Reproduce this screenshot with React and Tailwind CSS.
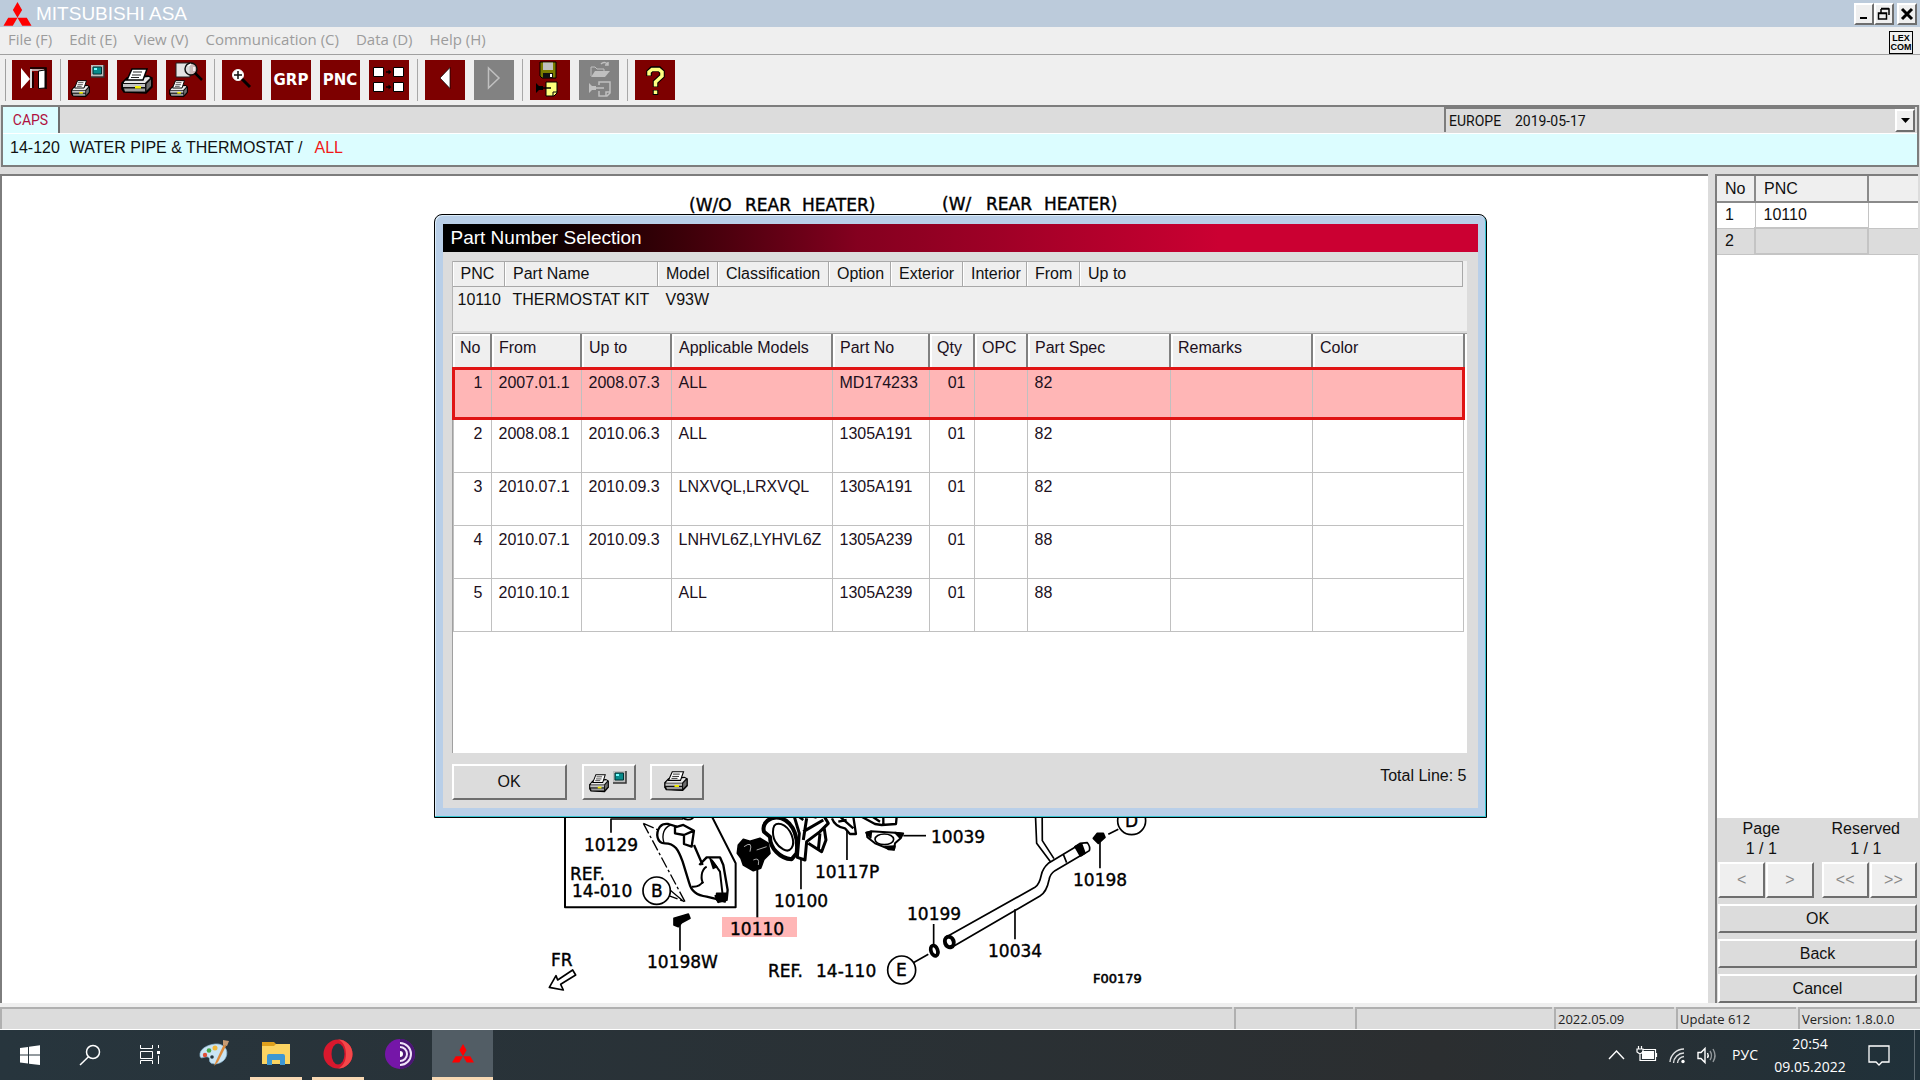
import React, { useState } from 'react';

const menus = ['File (F)', 'Edit (E)', 'View (V)', 'Communication (C)', 'Data (D)', 'Help (H)'];

const parts = [
  { no: 1, from: '2007.01.1', upTo: '2008.07.3', models: 'ALL', partNo: 'MD174233', qty: '01', spec: '82' },
  { no: 2, from: '2008.08.1', upTo: '2010.06.3', models: 'ALL', partNo: '1305A191', qty: '01', spec: '82' },
  { no: 3, from: '2010.07.1', upTo: '2010.09.3', models: 'LNXVQL,LRXVQL', partNo: '1305A191', qty: '01', spec: '82' },
  { no: 4, from: '2010.07.1', upTo: '2010.09.3', models: 'LNHVL6Z,LYHVL6Z', partNo: '1305A239', qty: '01', spec: '88' },
  { no: 5, from: '2010.10.1', upTo: '', models: 'ALL', partNo: '1305A239', qty: '01', spec: '88' },
];

const raised = 'border-2 border-t-white border-l-white border-r-[#6e6e6e] border-b-[#6e6e6e]';

function Logo({ className }) {
  return (
    <svg viewBox="0 0 28 24" className={className} fill="#fe0000">
      <path d="M14 0 18.6 8 14 15.7 9.4 8zM14 15.7H4.7L0 23.7h9.3zM14 15.7h9.3l4.7 8h-9.3z" />
    </svg>
  );
}

function Printer({ x = 0, y = 0, width = 32, height = 27 }) {
  return (
    <svg x={x} y={y} width={width} height={height} viewBox="0 0 32 27" preserveAspectRatio="none">
      <path d="M1 15 6 10 27 8 31 10V19L25 25 3 24 1 21z" fill="#111" stroke="#000" strokeWidth="1.5" />
      <path d="M3 14 7 11 28 9 29 10 24 15H3z" fill="#e8e8e8" />
      <path d="M2 16H24V19H2z" fill="#c4c4c4" />
      <path d="M3 20.500H24V23.500H4z" fill="#9b9b9b" />
      <path d="M25.500 16 30 11.500V18L25.500 22.500z" fill="#6e6e6e" />
      <path d="M11 1H26L22 12H6z" fill="#fff" stroke="#000" strokeWidth="1.5" />
      <path d="M12 4H21M11 7H20M10 9.500H18" stroke="#222" strokeWidth="1.200" />
      <path d="M14 18H20V20.500H14z" fill="#f4f000" />
    </svg>
  );
}

function Monitor({ x, y }) {
  return (
    <g transform={`translate(${x} ${y})`}>
      <path d="M0 0H13V12H0z" fill="#bdbdbd" />
      <path d="M13 0V12H0" fill="none" stroke="#333" strokeWidth="1.500" />
      <path d="M2 2H10.500V9H2z" fill="#078a8a" stroke="#033" />
      <path d="M3 3H6V5H3z" fill="#7ff" />
    </g>
  );
}

function Palm({ children }) {
  return <svg viewBox="0 0 40 40" className="block size-10">{children}</svg>;
}

// null is a separator
const tools = [
  {
    label: 'Exit',
    icon: (
      <Palm>
        <path d="M9 8V29L18 19z" fill="#fff" />
        <path d="M19 9V28" stroke="#d8d8d8" strokeWidth="2" />
        <path d="M18 8H34V29M21 12V28" fill="none" stroke="#000" strokeWidth="1.500" />
        <path d="M20 10H32" stroke="#ddd" strokeWidth="1.500" />
        <path d="M26.500 11 33 10V28L26.500 28.500z" fill="#fff" stroke="#000" />
      </Palm>
    ),
  },
  null,
  { label: 'Print screen', icon: <Palm><Printer x={3} y={20} width={19} height={18} /><Monitor x={23} y={5} /></Palm> },
  { label: 'Print', icon: <Palm><Printer x={4} y={8} width={32} height={27} /></Palm> },
  {
    label: 'Print preview',
    icon: (
      <Palm>
        <Printer x={3} y={20} width={19} height={18} />
        <path d="M10 3H24V17H10z" fill="#e4e4e4" stroke="#222" />
        <circle cx="25" cy="9" r="6" fill="#d9d9d9" fillOpacity=".85" stroke="#111" strokeWidth="1.500" />
        <path d="M22 6 25 4M28 7V11" stroke="#fff" strokeWidth="1.500" />
        <path d="M29 13 36 20" stroke="#000" strokeWidth="2.500" />
      </Palm>
    ),
  },
  null,
  {
    label: 'Zoom in',
    icon: (
      <Palm>
        <circle cx="16" cy="15" r="5.500" fill="#fff" stroke="#f4f4f4" strokeWidth="1" />
        <path d="M16 11V19M12 15H20" stroke="#111" strokeWidth="1.500" />
        <path d="M20 19 28 27" stroke="#000" strokeWidth="3" />
      </Palm>
    ),
  },
  { label: 'Group', text: 'GRP' },
  { label: 'Part name code', text: 'PNC' },
  {
    label: 'Compare',
    icon: (
      <Palm>
        <path d="M4.500 7.500H14.500V16.500H4.500zM24.500 7.500H34.500V16.500H24.500zM4.500 22.500H14.500V31.500H4.500zM24.500 22.500H34.500V31.500H24.500z" fill="#fff" stroke="#000" />
        <path d="M17 12H20M17 27H20" stroke="#000" strokeWidth="1.500" />
        <path d="M19.500 9.500 22.500 12 19.500 14.500zM19.500 24.500 22.500 27 19.500 29.500z" />
      </Palm>
    ),
  },
  null,
  { label: 'Previous', icon: <Palm><path d="M25 7.500V28.500L15 18z" fill="#fff" stroke="#000" strokeWidth=".7" /></Palm> },
  {
    label: 'Next',
    disabled: true,
    icon: <Palm><path d="M14.500 8V28L25 18z" fill="none" stroke="#c0c0c0" strokeWidth="1.500" /></Palm>,
  },
  null,
  {
    label: 'Save memo',
    icon: (
      <Palm>
        <path d="M10 2H26V18H12L10 16z" fill="#7c7c00" stroke="#000" />
        <path d="M13 2.500H23V10H13z" fill="#c0c0c0" />
        <path d="M13 13H23V18H13z" fill="#111" />
        <path d="M20 14H22V17H20z" fill="#fff" />
        <path d="M16 22H27V33L24 36H16z" fill="#ffff7c" stroke="#000" />
        <path d="M27 32H23V36" fill="none" stroke="#000" />
        <path d="M6 23 9 26H13V30H9L6 33z" fill="#000" />
        <path d="M13 28H21" stroke="#000" strokeWidth="1.500" />
      </Palm>
    ),
  },
  {
    label: 'Open memo',
    disabled: true,
    icon: (
      <Palm>
        <path d="M12 16V7H16L18 9H25V11" fill="none" stroke="#c0c0c0" />
        <path d="M12 17 16 11H31L26 17z" fill="#c0c0c0" />
        <path d="M22 4C25 1 28 3 29 5M26 5H29V2" fill="none" stroke="#c0c0c0" strokeWidth="1.500" />
        <path d="M20 25V22H31V33L28 36H20V31M31 32H27V36" fill="none" stroke="#c0c0c0" strokeWidth="1.500" />
        <path d="M10 23 13 26H17V30H13L10 33z" fill="#c0c0c0" />
        <path d="M17 28H25" stroke="#c0c0c0" strokeWidth="1.500" />
      </Palm>
    ),
  },
  null,
  {
    label: 'Help',
    icon: (
      <Palm>
        <g fill="none" strokeLinejoin="miter">
          <path d="M14 16V12L17 9H24L27 12V16L20.500 22V27M20.500 30V35" stroke="#000" strokeWidth="5.500" />
          <path d="M14 15.500V12L17 9.500H24L27 12V16L20.500 22V26.500M20.500 30.500V34" stroke="#ffff80" strokeWidth="3.500" />
        </g>
      </Palm>
    ),
  },
];

function Toolbar() {
  return (
    <div className="flex items-center gap-2 border-t border-[#a0a0a0] pl-[5px] py-1 h-[51px] bg-[#efefef]">
      <div className="self-stretch w-px bg-[#a0a0a0] -mr-0.5" />
      {tools.map((tool, i) =>
        tool === null ? (
          <div key={i} className="self-stretch w-px -mr-px bg-[#a8a8a8]" />
        ) : (
          <button
            key={i}
            aria-label={tool.label}
            disabled={tool.disabled}
            className={`size-10 shrink-0 overflow-hidden font-['DejaVu_Sans'] font-bold text-[15px] text-white ${tools[i - 1] ? 'ml-px' : ''} ${tool.disabled ? 'bg-[#828282]' : 'bg-[#7d0000]'}`}
          >
            {tool.icon || tool.text}
          </button>
        )
      )}
    </div>
  );
}

function WindowButton({ label, children }) {
  return (
    <button aria-label={label} className={`w-5 h-[22px] bg-[#efefef] ${raised}`}>
      <svg viewBox="0 0 16 18" className="block size-full" fill="none" stroke="#000">{children}</svg>
    </button>
  );
}

// labels of the exploded view: [text, x, baseline]
const labels = [
  ['(W/O', 689, 211], ['REAR', 745, 211], ['HEATER)', 802, 211],
  ['(W/', 942, 210], ['REAR', 986, 210], ['HEATER)', 1044, 210],
  ['10129', 584, 851], ['REF.', 570, 880], ['14-010', 572, 897], ['B', 651, 897],
  ['10100', 774, 907], ['10117P', 815, 878], ['10110', 730, 935], ['10198W', 647, 968],
  ['FR', 551, 966], ['REF.', 768, 977], ['14-110', 816, 977], ['E', 896, 976],
  ['10039', 931, 843], ['10199', 907, 920], ['10034', 988, 957], ['10198', 1073, 886], ['D', 1125, 827],
];

function Diagram() {
  return (
    <svg viewBox="2 176 1706 826" className="block w-full" role="img" aria-label="Water pipe and thermostat">
      <rect x="722" y="917" width="75" height="20" fill="#ffb6b6" />
      <g transform="translate(540 800) scale(.3333)" fill="none" stroke="#000" strokeWidth="5" strokeLinejoin="round">
        <path d="M75 -60V322H587V190L460 -60" strokeWidth="6" />
        <path d="M213 98V57H430M425 50Q440 66 460 54" />
        <path d="M310 70 435 305 388 288M310 70 355 90" strokeWidth="4" strokeDasharray="34 8 8 8" />
        <path d="M375 130C350 130 346 100 360 80Q368 70 385 72L410 80M375 130C405 130 415 150 428 185L448 250Q456 285 500 290L540 300" strokeWidth="7" />
        <path d="M392 75C372 82 364 105 372 128" strokeWidth="4" />
        <path d="M405 82 430 75 462 92 455 140 432 132V105L405 100zM432 105 462 92" strokeWidth="7" />
        <path d="M462 135 488 195M478 195 500 172H540L550 195 563 270 560 300 535 306 526 285" strokeWidth="7" />
        <path d="M515 180 540 215 548 285M500 200C482 210 482 240 490 250M455 260Q480 262 488 245" strokeWidth="6" />
        <path d="M510 175 530 200 520 205zM530 280 560 280 555 306 530 300z" fill="#000" />
        <path d="M390 270 432 305" strokeWidth="4" />
        <circle cx="350" cy="272" r="41" />
        <path d="M595 135 610 118 630 124 660 115 685 130 690 160 672 178 662 205 640 212 610 195 603 175 592 160z" fill="#000" />
        <path d="M612 140Q640 120 630 155M650 150 680 140M640 180Q660 170 655 195" stroke="#fff" strokeWidth="2" />
        <path d="M652 205V352" strokeWidth="6" />
        <path d="M672 95C665 70 690 45 725 55C765 70 775 120 770 160L755 178C720 175 690 145 690 110z" strokeWidth="12" />
        <path d="M700 85C705 60 740 70 755 105C768 140 750 160 730 148C710 138 695 115 700 85z" strokeWidth="6" />
        <path d="M760 40 778 100 772 172 795 180 800 125 840 95 865 70 850 45M800 55 790 120M805 130 845 155 858 120 852 80M840 100 835 150M790 95 850 60" strokeWidth="9" />
        <path d="M780 40 830 52M750 30 790 60" strokeWidth="8" />
        <path d="M783 175V268M921 90V180" />
        <path d="M876 55Q885 80 915 85L930 102 948 102 940 50M900 50 940 85M895 65 920 60" strokeWidth="7" />
        <path d="M402 355 425 348 445 342 450 355 425 368 415 380 402 375z" fill="#000" />
        <path d="M420 375V452M28 562 48 527 53 540 98 510 107 525 62 553 70 570z" />
      </g>
      <g transform="translate(850 800) scale(.3333)" fill="none" stroke="#000" strokeWidth="5" strokeLinejoin="round">
        <path d="M35 50 75 72 95 75 138 72 140 50M100 50V76M60 45 90 65" strokeWidth="7" />
        <path d="M50 98 62 94 135 98 158 102 152 115 135 130 132 148 112 145 75 130 52 112z" strokeWidth="6" />
        <ellipse cx="103" cy="118" rx="28" ry="16" />
        <path d="M105 140 135 138 132 150 115 148zM135 98 160 100 150 114zM48 98 64 95 62 114z" fill="#000" />
        <path d="M160 107H228" />
        <path d="M552 -60 560 130 602 186M576 -60 577 122 612 176" />
        <path d="M290 410 555 262Q568 254 574 225Q578 205 595 190L685 136" />
        <path d="M312 438 570 288Q590 276 597 240Q600 222 615 212L700 162" />
        <path d="M640 163 650 188M675 140Q690 150 692 168L718 152Q722 140 712 128L690 130z" />
        <path d="M675 140 695 132 705 160 690 166z" fill="#000" />
        <ellipse cx="298" cy="426" rx="13" ry="16" strokeWidth="12" transform="rotate(-20 298 426)" />
        <ellipse cx="253" cy="452" rx="10" ry="16" strokeWidth="11" transform="rotate(-20 253 452)" />
        <path d="M730 115 742 100 760 100 765 112 745 130z" fill="#000" />
        <path d="M750 125V205M775 103 805 88M495 328V418M251 372V435M190 488 235 463" />
        <circle cx="845" cy="62" r="42" />
        <circle cx="155" cy="510" r="42" />
      </g>
      <g className="font-['DejaVu_Sans'] text-[17px]" stroke="#000" strokeWidth=".4">
        {labels.map(([text, x, y]) => (
          <text key={`${x}-${y}`} x={x} y={y}>{text}</text>
        ))}
      </g>
      <text x="1093" y="983" className="font-['DejaVu_Sans'] text-[13px]" stroke="#000" strokeWidth=".6">F00179</text>
    </svg>
  );
}

function SidePanel() {
  const nav = 'h-9 bg-[#efefef] text-[#8a8a8a] ' + raised;
  const action = 'h-[29px] leading-5 bg-[#dcdcdc] ' + raised;
  return (
    <aside className="w-[203px] shrink-0 flex flex-col border-l-2 border-t-2 border-[#7d7d7d] bg-[#dcdcdc] text-base">
      <div className="flex-1 bg-white">
        <table className="w-full table-fixed border-collapse text-left leading-5">
          <colgroup><col className="w-[38px]" /><col className="w-[113px]" /><col /></colgroup>
          <thead>
            <tr className="h-[26px] bg-[#efefef]">
              <th className="font-normal pl-2 border-r-2 border-b-2 border-[#8a8a8a]">No</th>
              <th className="font-normal pl-2 border-r-2 border-b-2 border-[#8a8a8a]">PNC</th>
              <th className="border-b-2 border-[#8a8a8a]" aria-label="Name" />
            </tr>
          </thead>
          <tbody>
            <tr className="h-[26px]">
              <td className="pl-2 border border-l-0 border-[#c4c4c4]">1</td>
              <td className="pl-2 border border-[#c4c4c4]">10110</td>
              <td className="border-b border-[#c4c4c4]" />
            </tr>
            <tr className="h-[26px] bg-[#dcdcdc]">
              <td className="pl-2 border border-l-0 border-[#c4c4c4]">2</td>
              <td className="border-2 border-[#c4c4c4]" />
              <td className="border-b border-[#c4c4c4]" />
            </tr>
          </tbody>
        </table>
      </div>
      <div className="grid grid-cols-2 gap-x-4 text-center leading-5 pt-px pb-[3px]">
        <p className="pr-1">Page<br />1 / 1</p>
        <p className="pr-3">Reserved<br />1 / 1</p>
      </div>
      <div className="flex gap-2 px-px mb-1.5">
        <div className="flex flex-1 gap-px">
          <button aria-label="Previous page" className={`flex-1 ${nav}`}>&lt;</button>
          <button aria-label="Next page" className={`flex-1 ${nav}`}>&gt;</button>
        </div>
        <div className="flex flex-1 gap-px">
          <button aria-label="Previous reserved" className={`flex-1 ${nav}`}>&lt;&lt;</button>
          <button aria-label="Next reserved" className={`flex-1 ${nav}`}>&gt;&gt;</button>
        </div>
      </div>
      <div className="flex flex-col gap-1.5 px-px">
        <button className={action}>OK</button>
        <button className={action}>Back</button>
        <button className={action}>Cancel</button>
      </div>
    </aside>
  );
}

function PartDialog() {
  const [selected, setSelected] = useState(1);
  const info = 'font-normal pl-2 h-[25px] border border-l-0 border-[#a8a8a8] shadow-[inset_1px_0_0_#fff]';
  const head = 'font-normal pl-[7px] pb-1.5 border-r-2 border-b-2 border-[#808080] shadow-[inset_2px_2px_0_#fff]';
  const cell = 'align-top pl-[7px] pt-1 border border-[#c0c0c0]';

  return (
    <section
      role="dialog"
      aria-label="Part Number Selection"
      className="w-[1053px] max-w-full rounded-t-lg border border-black bg-[#b9cfe8] px-2 py-[9px] shadow-[inset_-1px_-1px_0_#35c3d0,inset_1px_1px_0_#dcecf8]"
    >
      <div className="bg-[#dcdcdc]">
        <h2 className="h-7 pl-2 bg-linear-to-r from-black via-[#84001f] via-40% to-[#cb0032] to-75% text-white text-[19px] leading-7">
          Part Number Selection
        </h2>
        <div className="pt-[9px] pl-[9px] pr-[11px] pb-2">
          <div className="h-[70px] bg-[#efefef] border-l border-[#b4b4b4] pr-1">
            <table className="w-full table-fixed border-collapse text-left whitespace-nowrap leading-5">
              <colgroup>
                <col className="w-[52px]" /><col className="w-[153px]" /><col className="w-[60px]" />
                <col className="w-[111px]" /><col className="w-[62px]" /><col className="w-[72px]" />
                <col className="w-[64px]" /><col className="w-[53px]" /><col />
              </colgroup>
              <thead>
                <tr>
                  {['PNC', 'Part Name', 'Model', 'Classification', 'Option', 'Exterior', 'Interior', 'From', 'Up to'].map(h => (
                    <th key={h} className={info}>{h}</th>
                  ))}
                </tr>
              </thead>
              <tbody>
                <tr>
                  <td className="pl-[5px] pt-[3px]">10110</td>
                  <td className="pl-2 pt-[3px]">THERMOSTAT KIT</td>
                  <td className="pl-2 pt-[3px]">V93W</td>
                  <td colSpan={6} />
                </tr>
              </tbody>
            </table>
          </div>

          <div className="mt-0.5 min-h-[420px] bg-white border-l border-t border-[#a0a0a0] pr-0.5">
            <table className="w-full table-fixed border-collapse text-left leading-5 text-[#20101c]">
              <colgroup>
                <col className="w-[38px]" /><col className="w-[90px]" /><col className="w-[90px]" />
                <col className="w-[161px]" /><col className="w-[97px]" /><col className="w-[45px]" />
                <col className="w-[53px]" /><col className="w-[143px]" /><col className="w-[142px]" /><col />
              </colgroup>
              <thead>
                <tr className="h-[34px] bg-[#efefef]">
                  {['No', 'From', 'Up to', 'Applicable Models', 'Part No', 'Qty', 'OPC', 'Part Spec', 'Remarks', 'Color'].map(h => (
                    <th key={h} className={head}>{h}</th>
                  ))}
                </tr>
              </thead>
              <tbody>
                {parts.map(p => (
                  <tr
                    key={p.no}
                    onClick={() => setSelected(p.no)}
                    className={p.no === selected ? 'h-[51px] bg-[#ffb6b6] outline-3 -outline-offset-2 outline-[#e01414]' : 'h-[53px]'}
                  >
                    <td className={`${cell} text-right pr-2`}>{p.no}</td>
                    <td className={cell}>{p.from}</td>
                    <td className={cell}>{p.upTo}</td>
                    <td className={cell}>{p.models}</td>
                    <td className={cell}>{p.partNo}</td>
                    <td className={`${cell} text-right pr-2`}>{p.qty}</td>
                    <td className={cell} />
                    <td className={cell}>{p.spec}</td>
                    <td className={cell} />
                    <td className={cell} />
                  </tr>
                ))}
              </tbody>
            </table>
          </div>

          <div className="flex items-start mt-[11px]">
            <button className={`w-[115px] h-9 ${raised}`}>OK</button>
            <button aria-label="Print screen" className={`ml-[15px] w-[54px] h-9 ${raised}`}>
              <svg viewBox="0 0 50 32" className="block size-full">
                <Printer x={5} y={8} width={20} height={19} />
                <Monitor x={29} y={5} />
              </svg>
            </button>
            <button aria-label="Print" className={`ml-3.5 w-[54px] h-9 ${raised}`}>
              <svg viewBox="0 0 50 32" className="block size-full"><Printer x={12} y={5} width={24} height={21} /></svg>
            </button>
            <p className="ml-auto leading-6">Total Line: 5</p>
          </div>
        </div>
      </div>
    </section>
  );
}

function StatusBar() {
  const cell = 'border-l-2 border-t-2 border-[#b0b0b0] pl-0.5';
  return (
    <footer className="flex gap-0.5 h-[23px] bg-[#dcdcdc] border-b border-white font-['Open_Sans'] text-[13px] leading-5 text-[#222]">
      <div className={`flex-1 ${cell}`} />
      <div className={`w-[119px] ${cell}`} />
      <div className={`w-[197px] ${cell}`} />
      <div className={`w-[120px] ${cell}`}>2022.05.09</div>
      <div className={`w-[120px] ${cell}`}>Update 612</div>
      <div className={`w-[122px] ${cell}`}>Version: 1.8.0.0</div>
    </footer>
  );
}

const systemButtons = [
  {
    name: 'Start',
    icon: <path d="M5 8 13 7V14.500H5zM14 6.800 25 5.300V14.500H14zM5 15.500H13V23.500L5 22.500zM14 15.500H25V25L14 23.700z" fill="#fff" />,
  },
  {
    name: 'Search',
    icon: <g fill="none" stroke="#fff" strokeWidth="1.500"><circle cx="18" cy="12" r="6.500" /><path d="M13.500 16.800 5 25" /></g>,
  },
  {
    name: 'Task view',
    icon: (
      <g fill="none" stroke="#fff">
        <path d="M5.500 5V8.500H17.500V5M5.500 24V20.500H17.500V24M5.500 11.500H17.500V18.500H5.500zM23.500 5V8M23.500 15.500V24" />
        <path d="M22 11H25V14H22z" fill="#fff" stroke="none" />
      </g>
    ),
  },
];

const apps = [
  {
    name: 'Paint',
    icon: (
      <>
        <path d="M16 5C25 4 30 11 27 18C24 25 15 26 12 24C9 22 12 19 9 18C5 17 2 21 1 17C0 10 8 6 16 5z" fill="#c9e4f4" stroke="#8db9d4" strokeWidth=".7" />
        <circle cx="6" cy="16" r="2.200" fill="#e04f38" /><circle cx="10" cy="11.500" r="2.300" fill="#48a547" /><circle cx="16" cy="9" r="2.500" fill="#f1b83b" />
        <circle cx="13" cy="18" r="1.800" fill="#26353e" />
        <path d="M25 5 17 22 15 27 19 23 27 7z" fill="#dd8a3b" />
        <path d="M24 1 30 2 28 7 24 6z" fill="#c79b73" />
      </>
    ),
  },
  {
    name: 'Explorer',
    open: true,
    icon: (
      <>
        <path d="M1 3H13L15 5V10H1z" fill="#dfa01c" />
        <path d="M1 7H13L15 5H29V25H1z" fill="#fcd462" />
        <path d="M6 26V17Q6 15 8 15H22Q24 15 24 17V26H19V21H11V26z" fill="#3e97d3" />
      </>
    ),
  },
  {
    name: 'Opera',
    open: true,
    icon: (
      <>
        <circle cx="15" cy="15" r="14.500" fill="#d9182d" />
        <path d="M15 .5A14.500 14.500 0 0 1 15 29.500C20 28 23 22 23 15S20 2 15 .5z" fill="#f5484a" />
        <ellipse cx="15" cy="15" rx="6.500" ry="10.500" fill="#26353e" />
      </>
    ),
  },
  {
    name: 'Tor Browser',
    icon: (
      <>
        <circle cx="15" cy="15" r="15" fill="#7516a8" />
        <path d="M15 0A15 15 0 0 1 15 30z" fill="#4b1675" />
        <path d="M15 4A11 11 0 0 1 15 26M15 8A7 7 0 0 1 15 22" fill="none" stroke="#f0e4f8" strokeWidth="2" />
        <path d="M15 12A3 3 0 0 1 15 18z" fill="#fff" />
      </>
    ),
  },
];

function Taskbar() {
  return (
    <nav className="h-[50px] flex items-stretch bg-linear-to-r from-[#27353d] via-[#2b2e30] via-75% to-[#20313a] text-white font-['Open_Sans'] text-sm">
      {systemButtons.map(b => (
        <button key={b.name} aria-label={b.name} className="w-[60px] flex items-center justify-center">
          <svg viewBox="0 0 30 30" className="size-[30px] block">{b.icon}</svg>
        </button>
      ))}
      <div className="flex ml-[3px] mr-px">
        {apps.map(app => (
          <button key={app.name} aria-label={app.name} className="w-[62px] px-[5px] flex flex-col items-center">
            <span className="flex-1 flex items-center">
              <svg viewBox="0 0 30 30" className="size-[30px] block">{app.icon}</svg>
            </span>
            <span className={`h-[3px] w-full ${app.open ? 'bg-[#f8d9b4]' : ''}`} />
          </button>
        ))}
      </div>
      <button aria-label="MITSUBISHI ASA" className="w-[61px] flex flex-col items-center bg-[#525d65]">
        <span className="flex-1 flex items-center"><Logo className="w-[22px]" /></span>
        <span className="h-[3px] w-full bg-[#f8d9b4]" />
      </button>

      <div className="ml-auto flex items-center">
        <svg viewBox="0 0 110 24" className="w-[110px] h-6 mr-3.5" fill="none" stroke="#fff" strokeWidth="1.400">
          <path d="M1 16 8.500 8 16 16" />
          <path d="M34 8H46V16H34z" fill="#fff" stroke="none" />
          <path d="M32 12V17.500H47.500V6.500H35M48.500 10V14M29 6H35V9L32 11 29 9zM30.500 6V3M33.500 6V3M32 11V14" strokeWidth="1.200" />
          <path d="M62 19A14 14 0 0 1 76 6M65.500 20A10.500 10.500 0 0 1 76 10M69.500 20A7 7 0 0 1 76 13.500" opacity=".85" />
          <circle cx="75" cy="18.500" r="1.700" fill="#fff" stroke="none" />
          <path d="M90 9.500H93L97 5.500V19.500L93 15.500H90zM99.500 10Q101 12.500 99.500 15" />
          <path d="M102 8Q105 12.500 102 17M105 6Q109 12.500 105 19" opacity=".5" />
        </svg>
        <span>РУС</span>
        <p className="w-[72px] ml-4 mr-[22px] text-center leading-[23px]">20:54<br />09.05.2022</p>
        <button aria-label="Notifications" className="mr-6">
          <svg viewBox="0 0 22 22" className="size-[22px] block" fill="none" stroke="#fff" strokeWidth="1.300">
            <path d="M1 2H21V18H14L11 21 8 18H1z" />
          </svg>
        </button>
        <span className="w-px h-full bg-[#5d6a71] mr-[5px]" />
      </div>
    </nav>
  );
}

export default function App() {
  return (
    <div className="min-h-screen flex flex-col bg-[#dcdcdc] font-['Liberation_Sans',sans-serif] text-base text-[#111]">
      <div className="relative flex-1 flex flex-col">
        <header className="h-[27px] flex items-center pl-[3px] pr-[3px] bg-[#bccbdb]">
          <Logo className="w-[29px] h-6" />
          <h1 className="ml-1 pt-0.5 text-[19px] text-white">MITSUBISHI ASA</h1>
          <div className="ml-auto flex">
            <WindowButton label="Minimize"><path d="M4 13H11" strokeWidth="2" /></WindowButton>
            <WindowButton label="Restore"><path d="M5 4H13V10M5 3.500H13M5 4V8M2.500 8H10.500V14H2.500zM2.500 8.500H10.500" strokeWidth="1.500" /></WindowButton>
            <div className="w-[3px]" />
            <WindowButton label="Close"><path d="M3 4 13 14M13 4 3 14" strokeWidth="3" /></WindowButton>
          </div>
        </header>

        <div className="h-[27px] flex items-center gap-[17px] pl-2 pr-[7px] bg-[#efefef] font-['Open_Sans'] text-[15px] leading-6 text-[#9c9c9c]">
          {menus.map(m => <button key={m} className="pb-1">{m}</button>)}
          <div className="ml-auto mt-1 w-6 h-[23px] border border-black text-center font-['Liberation_Sans'] text-[9px] leading-[9px] font-bold text-black pt-0.5">
            LEX<br />COM
          </div>
        </div>

        <Toolbar />

        <div className="mx-px mb-[7px] border-2 border-[#7d7d7d]">
          <div className="flex h-[26px] font-[Roboto] text-sm">
            <button className="w-[57px] bg-[#dcfdff] text-[#b01040] border-r-2 border-r-[#6e6e6e]">CAPS</button>
            <div className="relative ml-auto w-[471px] mr-0.5 mb-px border-l-2 border-t-2 border-[#7d7d7d]">
              <select aria-label="Region" className="appearance-none w-full h-full pl-[3px] bg-[#dcdcdc] leading-5 whitespace-pre">
                <option>{'EUROPE\u00a0\u00a0\u00a0\u00a02019-05-17'}</option>
              </select>
              <span className={`absolute right-0 inset-y-0 w-5 flex items-center justify-center bg-[#efefef] pointer-events-none ${raised}`}>
                <svg viewBox="0 0 9 5" className="w-[9px] h-[5px]"><path d="M0 0H9L4.500 5z" /></svg>
              </span>
            </div>
          </div>
          <div className="h-8 pl-[7px] border-t border-white bg-[#dcfdff] leading-7">
            <span className="mr-2.5">14-120</span>
            <span className="mr-3">WATER PIPE &amp; THERMOSTAT /</span>
            <span className="text-[#f01818]">ALL</span>
          </div>
        </div>

        <main className="flex-1 flex items-stretch pr-0.5">
          <div className="flex-1 min-w-0 bg-white border-l-2 border-t-2 border-[#7d7d7d] mr-[7px]">
            <Diagram />
          </div>
          <SidePanel />
        </main>

        <div className="h-1 bg-[#efefef]" />
        <StatusBar />

        <div className="absolute inset-0 flex items-center justify-center pt-0.5">
          <PartDialog />
        </div>
      </div>
      <Taskbar />
    </div>
  );
}
